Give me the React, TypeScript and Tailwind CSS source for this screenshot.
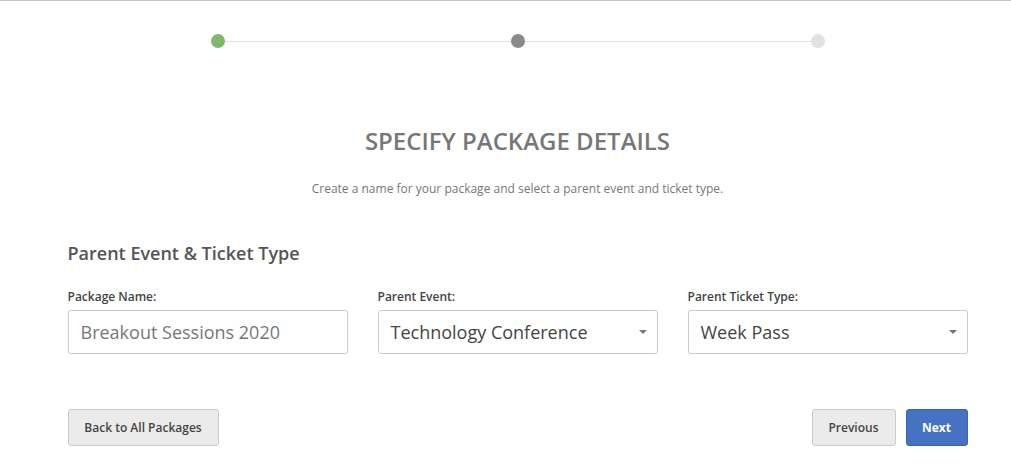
import React from "react";

function Caret() {
  return (
    <svg width="8" height="4" viewBox="0 0 8 4" className="shrink-0">
      <path d="M0 0 L8 0 L4 4 Z" fill="#777" />
    </svg>
  );
}

function Field({ label, children }: { label: string; children: React.ReactNode }) {
  return (
    <div className="flex w-[280px] flex-col">
      <div className="mb-[5px] h-[16px] text-[12px] font-semibold leading-[16px] text-[#444]">{label}</div>
      {children}
    </div>
  );
}

export default function App() {
  return (
    <div
      className="min-h-[463px] w-[1011px] bg-white border-t border-[#c4c4c4]"
      style={{ fontFamily: '"Open Sans", "Liberation Sans", sans-serif' }}
    >
      <div className="flex w-[1035px] flex-col items-center">
        {/* stepper */}
        <div className="relative mt-[33px] flex h-[14px] w-[614px] items-center justify-between">
          <div className="absolute left-[7px] right-[7px] top-[7px] h-px bg-[#dddddd]" />
          <div className="relative h-[14px] w-[14px] rounded-full bg-[#80b96e]" />
          <div className="relative h-[14px] w-[14px] rounded-full bg-[#8a8a8a]" />
          <div className="relative h-[14px] w-[14px] rounded-full bg-[#e2e2e2]" />
        </div>

        <h1 className="mt-[77px] text-[24px] font-semibold leading-[32px] text-[#777]">SPECIFY PACKAGE DETAILS</h1>
        <p className="mt-[24px] text-[12px] leading-[16px] text-[#777]">
          Create a name for your package and select a parent event and ticket type.
        </p>

        <div className="mt-[44px] flex w-[900px] flex-col">
          <h2 className="text-[18px] font-semibold leading-[24px] text-[#555]">Parent Event &amp; Ticket Type</h2>
          <div className="mt-[24px] flex gap-[30px]">
            <Field label="Package Name:">
              <div className="flex h-[44px] items-center rounded-[3px] border border-[#cccccc] px-[12px] text-[18px] text-[#777]">
                Breakout Sessions 2020
              </div>
            </Field>
            <Field label="Parent Event:">
              <div className="flex h-[44px] items-center justify-between rounded-[3px] border border-[#cccccc] pl-[12px] pr-[10px] text-[18px] text-[#444]">
                <span>Technology Conference</span>
                <Caret />
              </div>
            </Field>
            <Field label="Parent Ticket Type:">
              <div className="flex h-[44px] items-center justify-between rounded-[3px] border border-[#cccccc] pl-[12px] pr-[10px] text-[18px] text-[#444]">
                <span>Week Pass</span>
                <Caret />
              </div>
            </Field>
          </div>

          <div className="mt-[55px] flex items-center justify-between">
            <button className="h-[37px] w-[151px] rounded-[3px] border border-[#cccccc] bg-[#ebebeb] text-[12px] font-semibold text-[#444]">
              Back to All Packages
            </button>
            <div className="flex gap-[10px]">
              <button className="h-[37px] w-[84px] rounded-[3px] border border-[#cccccc] bg-[#ebebeb] text-[12px] font-semibold text-[#444]">
                Previous
              </button>
              <button className="h-[37px] w-[62px] rounded-[3px] border border-[#3b62ad] bg-[#4672c4] text-[12px] font-bold text-white">
                Next
              </button>
            </div>
          </div>
        </div>
      </div>
    </div>
  );
}
